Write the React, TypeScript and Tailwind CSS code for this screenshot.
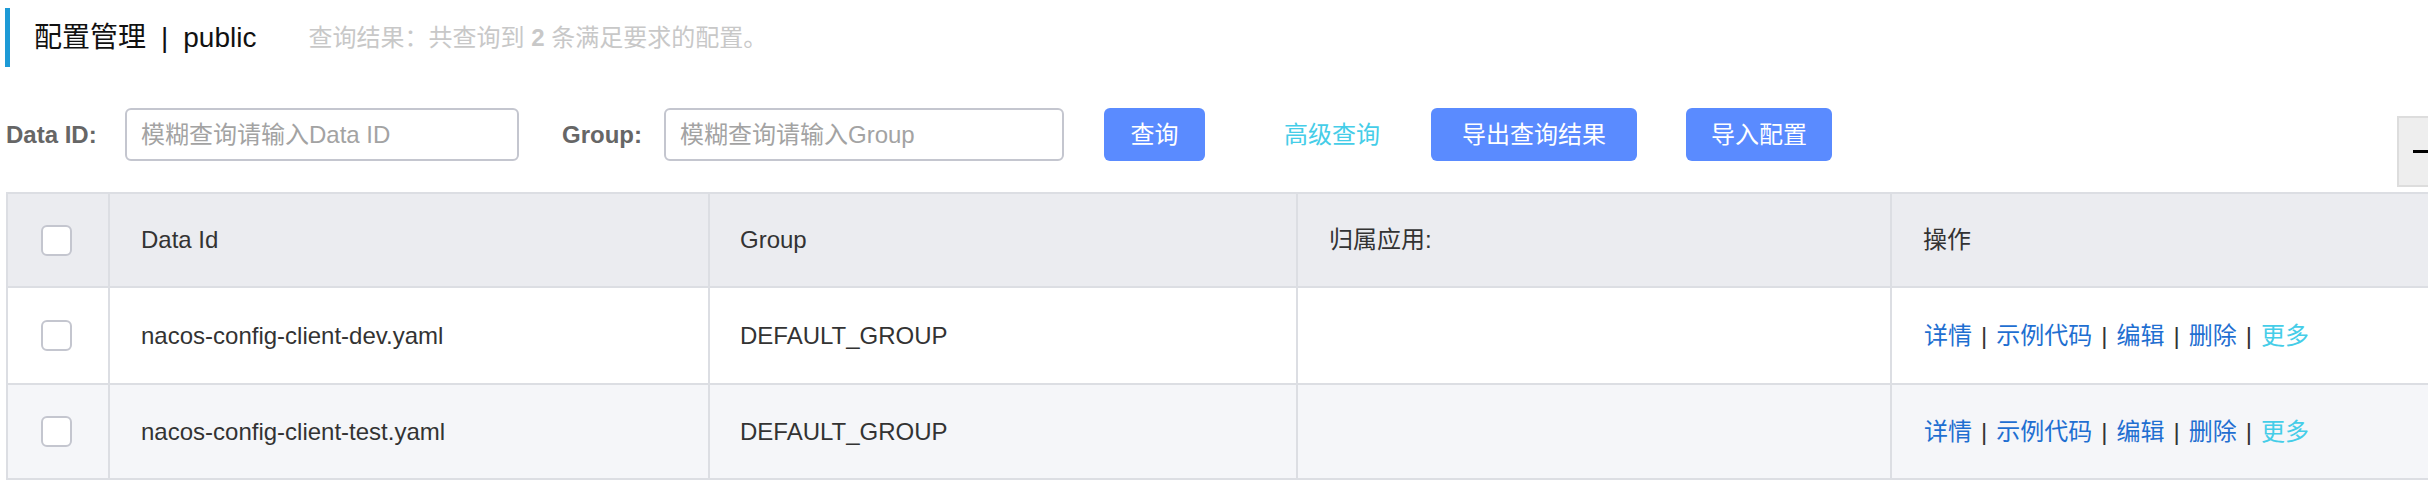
const rows = [
  { id: "nacos-config-client-dev.yaml", group: "DEFAULT_GROUP", bg: "bg-white", h: "h-[97px]" },
  { id: "nacos-config-client-test.yaml", group: "DEFAULT_GROUP", bg: "bg-[#f5f6f9]", h: "h-[95px]" },
];

function Checkbox() {
  return <div className="w-[31px] h-[31px] rounded-[6px] border-2 border-[#c4c6cf] bg-white" />;
}

function Ops() {
  const sep = <span className="mx-[9px] text-[#333]">|</span>;
  return (
    <div className="text-[24px] leading-[30px] text-[#1f6fd1] whitespace-nowrap">
      <span>详情</span>
      {sep}
      <span>示例代码</span>
      {sep}
      <span>编辑</span>
      {sep}
      <span>删除</span>
      {sep}
      <span className="text-[#45cde8]">更多</span>
    </div>
  );
}

export default function App() {
  return (
    <div className="w-[2428px] h-[488px] overflow-hidden bg-white font-['Liberation_Sans','Noto_Sans_CJK_SC',sans-serif]">
      {/* title */}
      <div className="flex items-center pt-[8px]">
        <div className="ml-[5px] w-[5px] h-[59px] bg-[#1d9ad6]" />
        <div className="ml-[24px] flex items-center text-[28px] leading-[36px] text-[#111] whitespace-nowrap">
          <span>配置管理</span>
          <span className="mx-[15px]">|</span>
          <span>public</span>
        </div>
        <div className="ml-[52px] text-[24px] leading-[30px] text-[#c8c8c8] whitespace-nowrap">
          查询结果：共查询到 <span className="font-bold">2</span> 条满足要求的配置。
        </div>
      </div>

      {/* search bar */}
      <div className="flex items-start mt-[41px] whitespace-nowrap [&>*]:shrink-0">
        <div className="ml-[6px] w-[119px] h-[53px] flex items-center text-[24px] font-bold text-[#666]">Data ID:</div>
        <input
          className="w-[394px] h-[53px] rounded-[6px] border-2 border-[#c4c6cf] pl-[14px] text-[24px] outline-none placeholder:text-[#a3a3a3]"
          placeholder="模糊查询请输入Data ID"
        />
        <div className="ml-[43px] w-[102px] h-[53px] flex items-center text-[24px] font-bold text-[#666]">Group:</div>
        <input
          className="w-[400px] h-[53px] rounded-[6px] border-2 border-[#c4c6cf] pl-[14px] text-[24px] outline-none placeholder:text-[#a3a3a3]"
          placeholder="模糊查询请输入Group"
        />
        <button className="ml-[40px] w-[101px] h-[53px] rounded-[6px] bg-[#5a8bff] text-white text-[24px]">查询</button>
        <div className="ml-[79px] h-[53px] flex items-center text-[24px] text-[#45cde8]">高级查询</div>
        <button className="ml-[51px] w-[206px] h-[53px] rounded-[6px] bg-[#5a8bff] text-white text-[24px]">导出查询结果</button>
        <button className="ml-[49px] w-[146px] h-[53px] rounded-[6px] bg-[#5a8bff] text-white text-[24px]">导入配置</button>
        <div className="ml-[565px] mt-[8px] w-[60px] h-[71px] border-2 border-[#dddddd] bg-[#eeeeee] flex items-center">
          <div className="ml-[14px] w-[18px] h-[3px] bg-black" />
        </div>
      </div>

      {/* table */}
      <div className="mt-[5px] ml-[6px] w-[2500px] border-l-2 border-t-2 border-[#dcdee3] text-[24px] text-[#333]">
        <div className="flex h-[94px] bg-[#ebecf0] border-b-2 border-[#dcdee3]">
          <div className="w-[102px] pl-[33px] flex items-center border-r-2 border-[#dcdee3]">
            <Checkbox />
          </div>
          <div className="w-[600px] pl-[31px] flex items-center border-r-2 border-[#dcdee3]">Data Id</div>
          <div className="w-[588px] pl-[30px] flex items-center border-r-2 border-[#dcdee3]">Group</div>
          <div className="w-[594px] pl-[31px] flex items-center border-r-2 border-[#dcdee3]">归属应用:</div>
          <div className="flex-1 pl-[31px] flex items-center">操作</div>
        </div>
        {rows.map((r) => (
          <div key={r.id} className={`flex ${r.h} ${r.bg} border-b-2 border-[#dcdee3]`}>
            <div className="w-[102px] pl-[33px] flex items-center border-r-2 border-[#dcdee3]">
              <Checkbox />
            </div>
            <div className="w-[600px] pl-[31px] flex items-center border-r-2 border-[#dcdee3]">{r.id}</div>
            <div className="w-[588px] pl-[30px] flex items-center border-r-2 border-[#dcdee3]">{r.group}</div>
            <div className="w-[594px] border-r-2 border-[#dcdee3]" />
            <div className="flex-1 pl-[32px] flex items-center">
              <Ops />
            </div>
          </div>
        ))}
      </div>
    </div>
  );
}
